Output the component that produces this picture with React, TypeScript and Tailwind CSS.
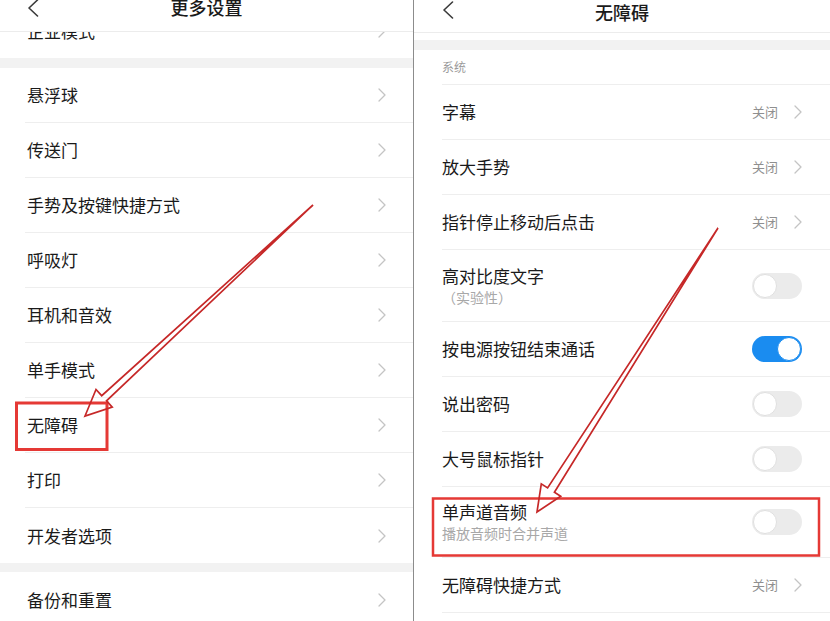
import React from "react";

const Chevron = () => (
  <svg width="8" height="14" viewBox="0 0 8 14" fill="none">
    <path d="M1 1L7 7L1 13" stroke="#c4c4c4" strokeWidth="1.3" strokeLinecap="round" strokeLinejoin="round" />
  </svg>
);

const Back = () => (
  <svg width="12" height="18" viewBox="0 0 12 18" fill="none">
    <path d="M10.5 1L2 9l8.5 8" stroke="#3a3a3a" strokeWidth="1.6" strokeLinecap="round" strokeLinejoin="round" />
  </svg>
);

function Toggle({ on }: { on?: boolean }) {
  return on ? (
    <div className="w-[50px] h-[26px] rounded-full bg-[#1a8cf0] p-[1px] flex justify-end">
      <div className="w-[24px] h-[24px] rounded-full bg-white border-[1.5px] border-[#1a8cf0]" />
    </div>
  ) : (
    <div className="w-[50px] h-[26px] rounded-full bg-[#ebebeb] p-[1px] flex">
      <div className="w-[24px] h-[24px] rounded-full bg-white border border-[#e0e0e0]" />
    </div>
  );
}

function LeftRow({ label, last }: { label: string; last?: boolean }) {
  return (
    <div
      className={
        "h-[55px] ml-[25px] pr-[27px] flex items-center justify-between " +
        (last ? "" : "border-b border-[#eeeeee]")
      }
    >
      <span className="pl-[2px] text-[17px] leading-[22px] text-[#1a1a1a]">{label}</span>
      <Chevron />
    </div>
  );
}

type RRow = {
  label: string;
  sub?: string;
  right: "off" | "on" | "closed";
  h: string;
};

function RightRow({ row }: { row: RRow }) {
  return (
    <div className={row.h + " ml-[28px] pr-[28px] flex items-center justify-between border-b border-[#eeeeee]"}>
      <div className="flex flex-col">
        <span className="text-[17px] leading-[22px] text-[#1a1a1a]">{row.label}</span>
        {row.sub && <span className="text-[14px] leading-[20px] text-[#a8a8a8]">{row.sub}</span>}
      </div>
      {row.right === "closed" ? (
        <div className="flex items-center gap-[16px]">
          <span className="text-[13px] text-[#8f8f8f]">关闭</span>
          <Chevron />
        </div>
      ) : (
        <Toggle on={row.right === "on"} />
      )}
    </div>
  );
}

const leftRows = ["悬浮球", "传送门", "手势及按键快捷方式", "呼吸灯", "耳机和音效", "单手模式", "无障碍", "打印", "开发者选项"];

const rightRows: RRow[] = [
  { label: "字幕", right: "closed", h: "h-[55px]" },
  { label: "放大手势", right: "closed", h: "h-[55px]" },
  { label: "指针停止移动后点击", right: "closed", h: "h-[55px]" },
  { label: "高对比度文字", sub: "（实验性）", right: "off", h: "h-[72px]" },
  { label: "按电源按钮结束通话", right: "on", h: "h-[55px]" },
  { label: "说出密码", right: "off", h: "h-[55px]" },
  { label: "大号鼠标指针", right: "off", h: "h-[55px]" },
  { label: "单声道音频", sub: "播放音频时合并声道", right: "off", h: "h-[71px]" },
  { label: "无障碍快捷方式", right: "closed", h: "h-[55px]" },
];

export default function App() {
  return (
    <div className="relative w-[830px] h-[621px] overflow-hidden bg-white flex font-['Noto_Sans_CJK_SC','Noto_Sans',sans-serif]">
      {/* Left panel */}
      <div className="relative w-[413px] h-[621px] overflow-hidden bg-white">
        <div className="absolute top-0 left-0 right-0 z-10 h-[32px] bg-white border-b border-[#ececec] grid grid-cols-[1fr_auto_1fr] items-start">
          <div className="pl-[27px] -mt-[1px]">
            <Back />
          </div>
          <span className="-mt-[2px] text-[18px] leading-[18px] font-medium text-[#1a1a1a]">更多设置</span>
          <div />
        </div>
        <div className="pt-[3px]">
          <LeftRow label="企业模式" last />
          <div className="h-[10px] bg-[#f2f2f2]" />
          {leftRows.map((l, i) => (
            <LeftRow key={l} label={l} last={i === leftRows.length - 1} />
          ))}
          <div className="h-[9px] bg-[#f2f2f2]" />
          <LeftRow label="备份和重置" last />
        </div>
      </div>
      <div className="w-[1px] h-[621px] bg-[#8c8c8c]" />
      {/* Right panel */}
      <div className="flex-1 h-[621px] bg-white">
        <div className="h-[33px] border-b border-[#ececec] grid grid-cols-[1fr_auto_1fr] items-start">
          <div className="pl-[28px] pt-[1px]">
            <Back />
          </div>
          <span className="mt-[2px] text-[18px] leading-[20px] font-medium text-[#1a1a1a]">无障碍</span>
          <div />
        </div>
        <div className="h-[7px]" />
        <div className="h-[10px] bg-[#f2f2f2]" />
        <div className="h-[35px] ml-[28px] flex items-center border-b border-[#eeeeee]">
          <span className="text-[12px] text-[#9a9a9a]">系统</span>
        </div>
        {rightRows.map((r) => (
          <RightRow key={r.label} row={r} />
        ))}
      </div>

      {/* Annotations */}
      <svg className="absolute inset-0 pointer-events-none" width="830" height="621" viewBox="0 0 830 621">
        <rect x="16.5" y="403" width="90.5" height="46.5" fill="none" stroke="#e53935" strokeWidth="3" />
        <rect x="433" y="498.5" width="386" height="57" fill="none" stroke="#e53935" strokeWidth="2.5" />
        <polygon
          points="313,205 101.7,395.7 96,389.5 85,416 112.2,407.1 106.5,400.9"
          fill="none"
          stroke="#c62828"
          strokeWidth="1.7"
          strokeLinejoin="miter"
        />
        <polygon
          points="718,228 547.6,487.9 541.3,483.9 537,512 560.7,496.3 554.4,492.2"
          fill="none"
          stroke="#c62828"
          strokeWidth="1.7"
          strokeLinejoin="miter"
        />
      </svg>
    </div>
  );
}
